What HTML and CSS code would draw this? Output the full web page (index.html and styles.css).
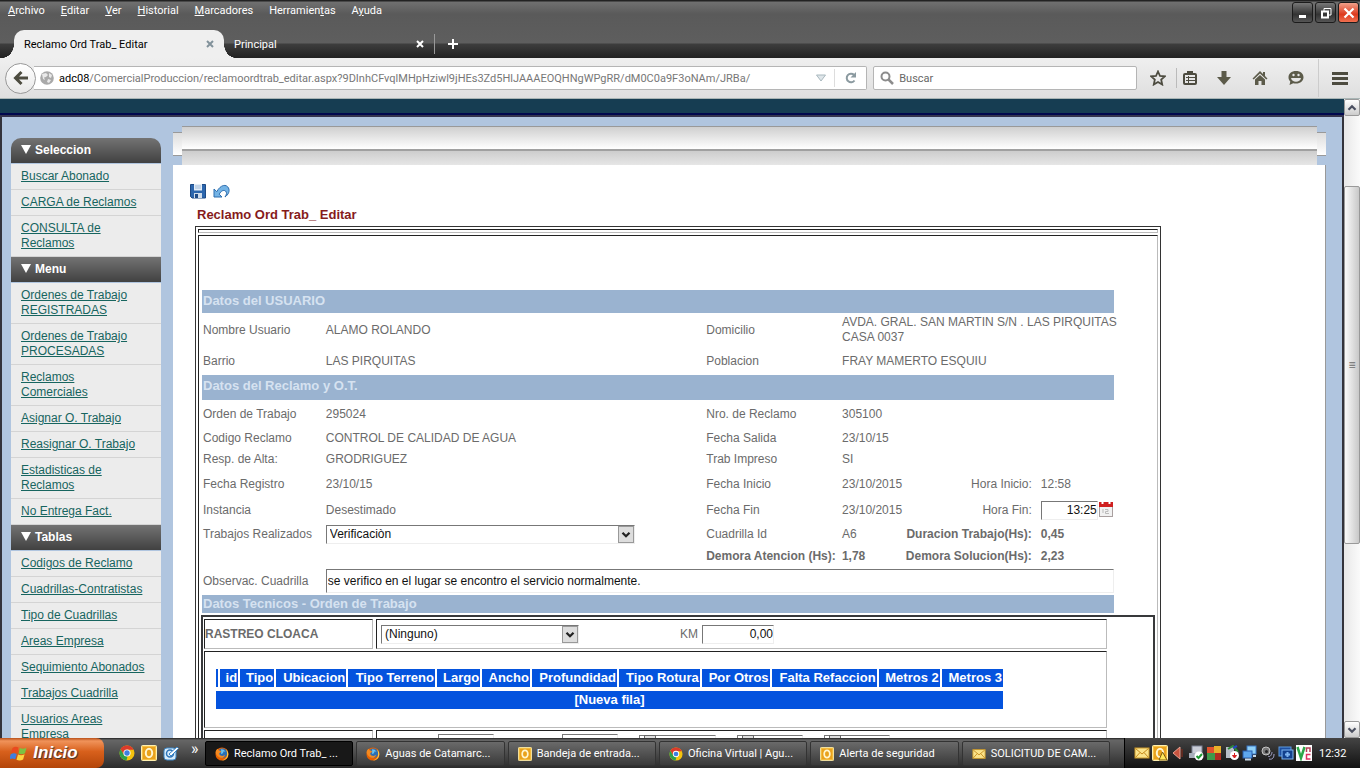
FILE: index.html
```html
<!DOCTYPE html>
<html lang="es">
<head>
    <meta charset="utf-8">
    <title>Reclamo Ord Trab_ Editar</title>
    <link rel="stylesheet" href="styles.css">
</head>
<body>
    <!-- shared icons -->
    <svg class="defs" width="0" height="0">
        <symbol id="firefox" viewBox="0 0 16 16">
            <circle cx="8" cy="8" r="7.5" fill="#e66000"/>
            <circle cx="8.6" cy="7" r="5.4" fill="#2a6fb5"/>
            <path d="M7 2.5c2 0 4 .8 5 3-1-.6-2-.6-2.600 0 .4 1.500-1 2.500-2.400 2.500z" fill="#6cc3ec"/>
            <path d="M.6 6C1 4 2 2.600 3 2c.2 1 .8 1.600 2 2 1.500.2 2 .8 1.800 1.800-.8.800-2 1-2 2.200 1 2.500 5 3 7 .5C11 12 8 13 5.500 12 2.500 11 1 8.500.6 6z" fill="#f58a1f"/>
            <path d="M12.500 2.500C15 4.500 16 8 14.500 11.500 13 14.500 9.500 16 6.500 15.300c4 0 7-2.800 7.300-6.300.2-2.500-.3-4.500-1.300-6.500z" fill="#ffcf4a"/>
        </symbol>
        <symbol id="chrome" viewBox="0 0 16 16">
            <circle cx="8" cy="8" r="7.500" fill="#f4c20d"/>
            <path d="M1.500 4.300A7.500 7.500 0 0 1 14.700 4.800L8 4.800 5 10z" fill="#db3a2b"/>
            <path d="M1.500 4.300 5 10l3.500 1.500L7.500 15.500A7.500 7.500 0 0 1 1.500 4.300z" fill="#2f9e4b"/>
            <circle cx="8" cy="8" r="3.600" fill="#fff"/>
            <circle cx="8" cy="8" r="2.700" fill="#3f7fe0"/>
        </symbol>
        <symbol id="outlook" viewBox="0 0 16 16">
            <rect x=".5" y=".5" width="15" height="15" rx="1" fill="#f6c044" stroke="#fff0b0"/>
            <rect x="2" y="2" width="12" height="12" fill="#e9a21d"/>
            <ellipse cx="8" cy="8" rx="3.200" ry="4.200" fill="none" stroke="#fff6d0" stroke-width="2"/>
        </symbol>
        <symbol id="mail" viewBox="0 0 16 16">
            <rect x="1" y="3" width="14" height="10" fill="#fbe38a" stroke="#c9982a"/>
            <path d="M1.500 3.500 8 9l6.500-5.500M1.500 12.500 6 7.500M14.500 12.500 10 7.500" fill="none" stroke="#c58a1c"/>
        </symbol>
        <symbol id="chevron" viewBox="0 0 16 16">
            <path d="M4 6l4 4 4-4" fill="none" stroke="currentColor" stroke-width="2.600"/>
        </symbol>
        <symbol id="close" viewBox="0 0 8 8">
            <path d="M1 1l6 6M7 1L1 7" fill="none" stroke="currentColor" stroke-width="2"/>
        </symbol>
    </svg>

    <header class="titlebar">
        <div class="title-row">
            <nav class="menubar">
                <a href="#"><u>A</u>rchivo</a>
                <a href="#"><u>E</u>ditar</a>
                <a href="#"><u>V</u>er</a>
                <a href="#"><u>H</u>istorial</a>
                <a href="#"><u>M</u>arcadores</a>
                <a href="#">Herramien<u>t</u>as</a>
                <a href="#">A<u>y</u>uda</a>
            </nav>
            <div class="window-buttons">
                <button aria-label="Minimizar"><svg width="16" height="16"><rect x="4" y="10" width="7" height="3" fill="#fff"/></svg></button>
                <button aria-label="Restaurar"><svg width="16" height="16" fill="none" stroke="#fff"><path d="M6 6V3.500h7V10h-2"/><rect x="4" y="6.500" width="6" height="6" stroke-width="2"/></svg></button>
                <button class="win-close" aria-label="Cerrar"><svg width="16" height="16"><path d="M3.500 3.500l9 9M12.500 3.500l-9 9" stroke="#fff" stroke-width="2.200"/></svg></button>
            </div>
        </div>
        <div class="tabs">
            <div class="tab active">
                <span>Reclamo Ord Trab_ Editar</span>
                <button aria-label="Cerrar pestaña"><svg width="8" height="8"><use href="#close"/></svg></button>
            </div>
            <div class="tab">
                <span>Principal</span>
                <button aria-label="Cerrar pestaña"><svg width="8" height="8"><use href="#close"/></svg></button>
            </div>
            <button class="new-tab" aria-label="Nueva pestaña"><svg width="10" height="10"><path d="M5 0v10M0 5h10" stroke="#fff" stroke-width="2"/></svg></button>
        </div>
    </header>

    <div class="toolbar">
        <button class="back" aria-label="Atrás"><svg width="16" height="16"><path d="M15 8H3M8.500 2L2.500 8l6 6" fill="none" stroke="#4d4c40" stroke-width="3"/></svg></button>
        <div class="urlbar">
            <svg width="14" height="14" viewBox="0 0 14 14"><circle cx="7" cy="7" r="6.800" fill="#a9a9a9"/><path d="M2 3l4-1 2 2-2 2-2 .5L5 9 3 8zM9 2l3 2-1 3-2-1zM8 8l3 1-2 3-2-1z" fill="#e9e9e9"/></svg>
            <label for="url">adc08</label><input id="url" type="text" value="/ComercialProduccion/reclamoordtrab_editar.aspx?9DInhCFvqlMHpHziwl9jHEs3Zd5HlJAAAEOQHNgWPgRR/dM0C0a9F3oNAm/JRBa/">
            <button class="drop" aria-label="Historial"><svg width="12" height="8"><path d="M1.500 1h9L6 7z" fill="#dfe6ea" stroke="#a9b8be"/></svg></button>
            <button class="reload" aria-label="Recargar"><svg width="14" height="14"><path d="M10.500 9.500A4.300 4.300 0 1 1 10 3.800" fill="none" stroke="#8b9aa0" stroke-width="2"/><path d="M12 1v5.500H6.500z" fill="#8b9aa0"/></svg></button>
        </div>
        <div class="searchbar">
            <svg width="14" height="14"><circle cx="5.500" cy="5.500" r="4" fill="none" stroke="#8c8c8c" stroke-width="2"/><path d="M8.500 8.500l4.500 4.500" stroke="#8c8c8c" stroke-width="2.500"/></svg>
            <input type="text" placeholder="Buscar" aria-label="Buscar">
        </div>
        <div class="tools">
            <button aria-label="Marcar"><svg width="16" height="16"><path d="M8 1.500l2 4.500 4.800.4-3.600 3.200 1 4.900L8 12l-4.200 2.500 1-4.900L1.200 6.400 6 6z" fill="none" stroke="#4d4c40" stroke-width="1.800"/></svg></button>
            <button class="ruled" aria-label="Lista"><svg width="16" height="16"><rect x="5" y="1" width="6" height="4" fill="#4d4c40"/><rect x="2" y="4" width="12" height="10" rx="1" fill="none" stroke="#4d4c40" stroke-width="2"/><path d="M4 7.500h9M4 10.500h9M6.500 6v8" stroke="#4d4c40"/></svg></button>
            <button aria-label="Descargas"><svg width="16" height="16"><path d="M5.500 1h5v6H15l-7 8-7-8h4.500z" fill="#5c5b4a"/></svg></button>
            <button aria-label="Inicio"><svg width="16" height="16"><path d="M8 1L.5 8.500l1.200 1L8 3.500l6.300 6 1.200-1L13 6V2h-2v2z" fill="#5c5b4a"/><path d="M3 9.500l5-4.500 5 4.500V15H9.500v-4h-3v4H3z" fill="#5c5b4a"/></svg></button>
            <button aria-label="Chat"><svg width="16" height="16"><path d="M8 1c4.500 0 7.500 2.700 7.500 6.300S12.500 13.600 8 13.600c-1 0-2-.1-2.800-.4L1.500 15l.8-3.500C1 10.300.5 9 .5 7.300.5 3.700 3.500 1 8 1z" fill="#5c5b4a"/><path d="M3 8h10c-.5 2.500-2.500 3.800-5 3.800S3.500 10.500 3 8z" fill="#e6e6e6"/><circle cx="5.500" cy="5" r="1.200" fill="#e6e6e6"/><circle cx="10.500" cy="5" r="1.200" fill="#e6e6e6"/></svg></button>
        </div>
        <button class="hamburger" aria-label="Menú"><svg width="16" height="14"><path d="M0 2.500h16M0 7.500h16M0 12.500h16" stroke="#4d4c40" stroke-width="3"/></svg></button>
    </div>

    <div class="viewport">
        <div class="page">
            <div class="page-top"></div>
            <div class="page-body">
                <aside class="sidebar">
                    <h2>Seleccion</h2>
                    <ul>
                        <li><a href="#">Buscar Abonado</a></li>
                        <li><a href="#">CARGA de Reclamos</a></li>
                        <li><a href="#">CONSULTA de Reclamos</a></li>
                    </ul>
                    <h2>Menu</h2>
                    <ul>
                        <li><a href="#">Ordenes de Trabajo REGISTRADAS</a></li>
                        <li><a href="#">Ordenes de Trabajo PROCESADAS</a></li>
                        <li><a href="#">Reclamos<br>Comerciales</a></li>
                        <li><a href="#">Asignar O. Trabajo</a></li>
                        <li><a href="#">Reasignar O. Trabajo</a></li>
                        <li><a href="#">Estadisticas de Reclamos</a></li>
                        <li><a href="#">No Entrega Fact.</a></li>
                    </ul>
                    <h2>Tablas</h2>
                    <ul>
                        <li><a href="#">Codigos de Reclamo</a></li>
                        <li><a href="#">Cuadrillas-Contratistas</a></li>
                        <li><a href="#">Tipo de Cuadrillas</a></li>
                        <li><a href="#">Areas Empresa</a></li>
                        <li><a href="#">Sequimiento Abonados</a></li>
                        <li><a href="#">Trabajos Cuadrilla</a></li>
                        <li><a href="#">Usuarios Areas Empresa</a></li>
                    </ul>
                </aside>

                <main>
                    <div class="strip">
                        <div class="strip-end"></div>
                        <div class="strip-mid">
                            <div class="strip-top"></div>
                            <div class="strip-bottom"></div>
                        </div>
                        <div class="strip-end"></div>
                    </div>
                    <div class="content">
                        <div class="actions">
                            <button aria-label="Guardar"><svg width="16" height="16"><path d="M.5 1.500h15v13.500H2L.5 13.500z" fill="#2c66ad" stroke="#1d4a86"/><rect x="4" y="1" width="8" height="6.500" fill="#e4eef8"/><path d="M5 3h6M5 5h6" stroke="#a3bcd8"/><rect x="4" y="10" width="8" height="5" fill="#cfdcea"/><rect x="5" y="11" width="3" height="4" fill="#1d4a86"/></svg></button>
                            <button aria-label="Deshacer"><svg width="17" height="16"><path d="M1 6v8h8l-2.800-2.800C8 8 10.500 6.500 12.500 8c1.500 1.300 1.300 3.500-.5 6 3.500-2.500 5-6 3.500-9C13.500.8 7.500 1.500 3.800 8.700z" fill="#74b4e6" stroke="#2b6cae"/></svg></button>
                        </div>
                        <h1>Reclamo Ord Trab_ Editar</h1>

                        <form class="frame">
                            <div class="frame-line"></div>
                            <div class="frame-box">
                                <h3 class="band band-user">Datos del USUARIO</h3>
                                <div class="row row-address">
                                    <span>Nombre Usuario</span><span>ALAMO ROLANDO</span>
                                    <span>Domicilio</span><span class="wide">AVDA. GRAL. SAN MARTIN S/N . LAS PIRQUITAS<br>CASA 0037</span>
                                </div>
                                <div class="row row-tall">
                                    <span>Barrio</span><span>LAS PIRQUITAS</span>
                                    <span>Poblacion</span><span class="wide">FRAY MAMERTO ESQUIU</span>
                                </div>

                                <h3 class="band band-claim">Datos del Reclamo y O.T.</h3>
                                <div class="row row-tall">
                                    <span>Orden de Trabajo</span><span>295024</span>
                                    <span>Nro. de Reclamo</span><span>305100</span>
                                </div>
                                <div class="row row-short">
                                    <span>Codigo Reclamo</span><span>CONTROL DE CALIDAD DE AGUA</span>
                                    <span>Fecha Salida</span><span>23/10/15</span>
                                </div>
                                <div class="row row-short">
                                    <span>Resp. de Alta:</span><span>GRODRIGUEZ</span>
                                    <span>Trab Impreso</span><span>SI</span>
                                </div>
                                <div class="row row-tall">
                                    <span>Fecha Registro</span><span>23/10/15</span>
                                    <span>Fecha Inicio</span><span>23/10/2015</span>
                                    <span class="right">Hora Inicio:</span><span>12:58</span>
                                </div>
                                <div class="row">
                                    <span>Instancia</span><span>Desestimado</span>
                                    <span>Fecha Fin</span><span>23/10/2015</span>
                                    <label class="right" for="horafin">Hora Fin:</label>
                                    <span class="time">
                                        <input id="horafin" type="text" value="13:25">
                                        <svg width="14" height="16"><rect x=".5" y="2.500" width="13" height="13" fill="#f2f2f2" stroke="#a9a0a0"/><rect x="0" y="1" width="14" height="5" fill="#cf1f1f"/><path d="M3.500 0v3M10.500 0v3" stroke="#fff" stroke-width="2"/><path d="M4 8v4M6 8.500h3v2H6.500v2H10" fill="none" stroke="#bbb"/></svg>
                                    </span>
                                </div>
                                <div class="row">
                                    <label for="trabajos">Trabajos Realizados</label>
                                    <span class="dropdown dropdown-work">
                                        <select id="trabajos"><option>Verificaciòn</option></select>
                                        <svg width="16" height="17"><use href="#chevron"/></svg>
                                    </span>
                                    <span>Cuadrilla Id</span><span>A6</span>
                                    <b class="right">Duracion Trabajo(Hs):</b><b>0,45</b>
                                </div>
                                <div class="row row-short">
                                    <span></span><span></span>
                                    <b>Demora Atencion (Hs):</b><b>1,78</b>
                                    <b class="right">Demora Solucion(Hs):</b><b>2,23</b>
                                </div>
                                <div class="row row-obs">
                                    <label for="observac">Observac. Cuadrilla</label>
                                    <input id="observac" type="text" value="se verifico en el lugar se encontro el servicio normalmente.">
                                </div>

                                <h3 class="band band-tech">Datos Tecnicos - Orden de Trabajo</h3>
                                <div class="tech">
                                    <div class="tech-row">
                                        <div class="cell cell-name"><b>RASTREO CLOACA</b></div>
                                        <div class="cell cell-fields">
                                            <span class="dropdown dropdown-trace">
                                                <select aria-label="Rastreo cloaca"><option>(Ninguno)</option></select>
                                                <svg width="16" height="17"><use href="#chevron"/></svg>
                                            </span>
                                            <label for="km">KM</label>
                                            <input id="km" type="text" value="0,00">
                                        </div>
                                    </div>
                                    <div class="cell cell-table">
                                        <table>
                                            <thead>
                                                <tr><th></th><th>id</th><th>Tipo</th><th>Ubicacion</th><th>Tipo Terreno</th><th>Largo</th><th>Ancho</th><th>Profundidad</th><th>Tipo Rotura</th><th>Por Otros</th><th>Falta Refaccion</th><th>Metros 2</th><th>Metros 3</th></tr>
                                            </thead>
                                            <tbody>
                                                <tr><td colspan="13">[Nueva fila]</td></tr>
                                            </tbody>
                                        </table>
                                    </div>
                                    <div class="tech-row">
                                        <div class="cell cell-name"></div>
                                        <div class="cell cell-more">
                                            <input class="first" type="text" aria-label="Largo">
                                            <input type="text" aria-label="Ancho">
                                            <span class="pick"><input class="long" type="text" aria-label="Profundidad"><i></i></span>
                                            <span class="pick"><input type="text" aria-label="Metros 2"><i></i></span>
                                            <span class="pick"><input type="text" aria-label="Metros 3"><i></i></span>
                                        </div>
                                    </div>
                                </div>
                            </div>
                        </form>
                    </div>
                </main>
            </div>
        </div>
        <div class="scrollbar">
            <button aria-label="Subir"><svg class="up" width="14" height="14"><use href="#chevron"/></svg></button>
            <div class="track"><div class="thumb">≡</div></div>
            <button aria-label="Bajar"><svg width="14" height="14"><use href="#chevron"/></svg></button>
        </div>
    </div>

    <footer class="taskbar">
        <button class="start">
            <svg width="18" height="18"><path d="M2.500 4C4.500 2.500 6.500 2.500 8.500 3.500L7 9C5 8 3 8 1 9.300z" fill="#ea4a1f"/><path d="M9.800 4C12 5 14 5 16.500 3.800L15 9.200c-2.200 1.200-4.300 1.200-6.500.3z" fill="#7cc242"/><path d="M.7 10.300C2.700 9 4.700 9 6.700 10l-1.500 5.300c-2-1-4-1-6 .2z" fill="#3f7fe0"/><path d="M8 10.500c2.200 1 4.300 1 6.600-.2l-1.500 5.300c-2.200 1.200-4.500 1.200-6.600.2z" fill="#ffd23f"/></svg>
            Inicio
        </button>
        <div class="quick">
            <svg width="16" height="16"><use href="#chrome"/></svg>
            <svg width="16" height="16"><use href="#outlook"/></svg>
            <svg width="16" height="16"><rect x="1" y="3" width="12" height="12" rx="3" fill="#d8ecfa" stroke="#3b86c8"/><circle cx="7" cy="8.500" r="3.500" fill="none" stroke="#2e74b8" stroke-width="1.500"/><path d="M6 9l8-7 1.500 1.500L8 11z" fill="#fff" stroke="#3b86c8"/></svg>
            <span>»</span>
        </div>
        <div class="tasks">
            <button class="current"><svg width="14" height="14"><use href="#firefox"/></svg>Reclamo Ord Trab_ ...</button>
            <button><svg width="14" height="14"><use href="#firefox"/></svg>Aguas de Catamarc...</button>
            <button><svg width="14" height="14"><use href="#outlook"/></svg>Bandeja de entrada...</button>
            <button><svg width="14" height="14"><use href="#chrome"/></svg>Oficina Virtual | Agu...</button>
            <button><svg width="14" height="14"><use href="#outlook"/></svg>Alerta de seguridad</button>
            <button><svg width="14" height="14"><use href="#mail"/></svg>SOLICITUD DE CAM...</button>
        </div>
        <div class="tray">
            <svg width="16" height="16"><use href="#mail"/></svg>
            <svg width="16" height="16"><use href="#outlook"/><path d="M10.500 7l4.500 8H7z" fill="#ffe85a" stroke="#7a5a10"/></svg>
            <svg width="16" height="16"><path d="M3 8l7-6v12z" fill="#c9543f" stroke="#e8a090"/><path d="M12 4v8" stroke="#5e2a20" stroke-width="2"/></svg>
            <svg width="16" height="16"><rect x="4" y="1" width="10" height="8" fill="#c9ccd6" stroke="#7d8294"/><rect x="1" y="8" width="9" height="5" fill="#a8aebb"/><circle cx="11" cy="11" r="4.500" fill="#fff"/><path d="M8.500 11l2 2 3.500-4" fill="none" stroke="#1d9a33" stroke-width="2"/></svg>
            <svg width="16" height="16"><rect x="1" y="2" width="7" height="6" fill="#e0522d"/><rect x="8" y="1" width="7" height="8" fill="#e8b02a"/><rect x="1" y="8" width="8" height="7" fill="#3f9a4a"/><rect x="9" y="8" width="6" height="7" fill="#b22c20"/></svg>
            <svg width="16" height="16"><rect x="2" y="2" width="8" height="11" fill="#b9bec8"/><path d="M4 4l5-3 5 6" fill="none" stroke="#2d8a3a" stroke-width="2"/><path d="M9 3l4-2" stroke="#2546c0" stroke-width="2"/><circle cx="10.500" cy="10.500" r="4.500" fill="#fff"/><path d="M10.500 8v3M8.500 10.500h4l-2 2.500z" fill="#d62020" stroke="#d62020"/></svg>
            <svg width="16" height="16"><rect x="5" y="1" width="9" height="8" fill="#8fd0f7" stroke="#3a78c8"/><rect x="1" y="6" width="9" height="7" fill="#5fa8ee" stroke="#2a5fb0"/><path d="M3 14.500h6M11 11h3" stroke="#c8d8e8" stroke-width="2"/></svg>
            <svg width="16" height="16" fill="none"><circle cx="6" cy="6" r="4" fill="#777" stroke="#c5c5c5"/><circle cx="6.500" cy="6.500" r="1.500" fill="#222"/><path d="M8 11c2 2 4-2 4-4M9 14c4 1 5-2 5-5" stroke="#a9a9d0"/></svg>
            <svg width="16" height="16"><rect x="1" y="2" width="12" height="9" fill="#1d4fa0" stroke="#5f9be0"/><rect x="4" y="5" width="11" height="9" fill="#12408c" stroke="#7db4f0"/><path d="M7 9.500h5M9.500 7v5" stroke="#7db4f0" stroke-width="2"/></svg>
            <svg width="16" height="16"><rect width="16" height="16" fill="#fff"/><path d="M1.500 2L5 13 8.500 2" fill="none" stroke="#2da84a" stroke-width="2.500"/><path d="M10.500 7V3h3.500v4" fill="none" stroke="#b6435a" stroke-width="1.500"/><path d="M14.500 9.500h-4V14h4" fill="none" stroke="#e03060" stroke-width="1.500"/></svg>
            <time>12:32</time>
        </div>
    </footer>
</body>
</html>
```
FILE: styles.css
```css
* {
    box-sizing: border-box;
}
body {
    margin: 0;
    height: 100vh;
    display: flex;
    flex-direction: column;
    overflow: hidden;
    font-family: "Liberation Sans", Arial, sans-serif;
    font-size: 12px;
    line-height: 15px;
    color: #6b6b6b;
}
button, input, select {
    font-family: inherit;
    font-size: inherit;
    color: inherit;
    margin: 0;
    padding: 0;
}
button {
    background: none;
    border: none;
    display: flex;
    align-items: center;
    justify-content: center;
}
svg {
    display: block;
    flex: none;
}
.defs {
    position: absolute;
}
h1, h2, h3, ul {
    margin: 0;
    padding: 0;
}

/* browser window */
.titlebar, .toolbar, .taskbar {
    flex: none;
    font-family: Roboto, "Liberation Sans", sans-serif;
    font-size: 11px;
}
.titlebar {
    height: 58px;
    display: flex;
    flex-direction: column;
    justify-content: space-between;
    background: linear-gradient(#222 0, #222 1px, #707070 2px, #5a5a5a 14px, #5e5e5e 43px, #3d3d3d 44px, #222 58px);
    color: #fff;
}
.title-row {
    display: flex;
    justify-content: space-between;
}
.menubar {
    display: flex;
    gap: 16px;
    padding: 3px 8px;
}
.menubar a {
    color: #fff;
    text-decoration: none;
}
.window-buttons {
    display: flex;
    gap: 2px;
    padding: 2px 1px 0;
}
.window-buttons button {
    width: 21px;
    height: 21px;
    border: 1px solid #1c1c1c;
    border-radius: 3px;
    background: linear-gradient(#777, #333 60%, #555);
}
.window-buttons .win-close {
    background: linear-gradient(#f0a08a, #dd3a1e 60%, #f07050);
}
.tabs {
    display: flex;
    padding-left: 14px;
}
.tab {
    display: flex;
    align-items: center;
    justify-content: space-between;
    width: 210px;
    height: 28px;
    padding: 0 10px;
}
.tab.active {
    position: relative;
    background: #efefef;
    color: #000;
    border-radius: 10px 10px 0 0;
}
.tab.active::before, .tab.active::after {
    content: "";
    position: absolute;
    bottom: 0;
    width: 12px;
    height: 14px;
}
.tab.active::before {
    right: 100%;
    background: radial-gradient(ellipse 12px 14px at 0 0, transparent 98%, #efefef 100%);
}
.tab.active::after {
    left: 100%;
    background: radial-gradient(ellipse 12px 14px at 100% 0, transparent 98%, #efefef 100%);
}
.tab.active button {
    color: #82929b;
}
.new-tab {
    width: 36px;
    margin: 4px 0;
    border-left: 1px solid #999;
}
.toolbar {
    height: 41px;
    display: flex;
    align-items: center;
    padding-left: 5px;
    background: linear-gradient(#efefef, #dfdfdf);
    border-bottom: 1px solid #a9b5b5;
}
.back {
    width: 31px;
    height: 31px;
    border: 1px solid #999;
    border-radius: 50%;
    background: linear-gradient(#fff, #e8e8e8);
    position: relative;
}
.urlbar {
    flex: 840 1 0;
    display: flex;
    align-items: center;
    height: 24px;
    margin-left: -2px;
    padding-left: 6px;
    border: 1px solid #b5b5b5;
    border-left: none;
    border-radius: 0 2px 2px 0;
    background: #fff;
}
.urlbar label {
    padding-left: 5px;
    color: #000;
}
.urlbar input[type="text"], .searchbar input[type="text"] {
    flex: 1;
    min-width: 0;
    border: none;
    background: none;
    color: #777;
}
.drop {
    width: 26px;
}
.reload {
    width: 32px;
    height: 18px;
    border-left: 1px solid #ddd;
}
.searchbar {
    flex: 260 1 0;
    display: flex;
    align-items: center;
    gap: 5px;
    height: 24px;
    margin-left: 6px;
    padding-left: 6px;
    border: 1px solid #b5b5b5;
    border-radius: 2px;
    background: #fff;
}
.searchbar input::placeholder {
    color: #666;
}
.tools {
    display: flex;
    padding: 0 4px 0 3px;
}
.tools button {
    width: 36px;
    height: 20px;
}
.tools .ruled {
    width: 30px;
    padding-right: 4px;
    border-left: 1px solid #bbb;
}
.hamburger {
    width: 42px;
    height: 38px;
    border-left: 1px solid #ccc;
}

/* page */
.viewport {
    flex: 1;
    min-height: 0;
    display: flex;
}
.page {
    flex: 1;
    min-width: 0;
    overflow: hidden;
    display: flex;
    flex-direction: column;
}
.page-top {
    flex: none;
    height: 18px;
    background: #163d52;
    border-bottom: 2px solid #34344e;
    box-shadow: inset 0 -2px #00084e;
}
.page-body {
    flex: 1;
    min-height: 0;
    display: flex;
    gap: 12px;
    padding: 9px 16px 0 9px;
    border: solid #33333b;
    border-width: 0 2px;
    background: #b0c5df;
}
.sidebar {
    flex: none;
    width: 150px;
    padding-top: 12px;
}
.sidebar h2 {
    height: 25px;
    margin-bottom: 1px;
    padding-left: 10px;
    background: linear-gradient(#737373, #414141);
    color: #fff;
    font-size: 12px;
    line-height: 25px;
}
.sidebar h2::before {
    content: "";
    display: inline-block;
    margin-right: 4px;
    border: 5px solid transparent;
    border-top: 9px solid #fff;
    border-bottom: 0;
}
.sidebar h2:first-child {
    border-radius: 10px 10px 0 0;
}
.sidebar ul {
    list-style: none;
    background: #ececec;
}
.sidebar li {
    padding: 5px 10px;
    border-bottom: 1px solid #d4d4d4;
}
.sidebar a {
    color: #17655f;
}
main {
    flex: 1;
    min-width: 0;
    display: flex;
    flex-direction: column;
}
.strip {
    flex: none;
    display: flex;
    height: 39px;
}
.strip-end {
    width: 9px;
    height: 24px;
    margin-top: 6px;
    border-top: 1px solid #999;
    border-bottom: 1px solid #999;
    background: linear-gradient(#ddd, #fff);
}
.strip-mid {
    flex: 1;
}
.strip-top {
    height: 25px;
    border-top: 1px solid #999;
    border-bottom: 2px solid #a0a0a0;
    background: linear-gradient(#cfcfcf, #fff);
}
.strip-bottom {
    height: 14px;
    background: linear-gradient(#cdcdcd, #e6e6e6);
}
.content {
    flex: 1;
    min-height: 0;
    padding: 18px 20px 0 22px;
    background: #fff;
    border-right: 1px solid #999;
}
.actions {
    display: flex;
    gap: 7px;
    margin-left: -5px;
}
h1 {
    margin: 8px 2px 4px;
    color: #861b1b;
    font-size: 13px;
    line-height: 15px;
}
.frame {
    width: 87%;
    padding: 2px;
    border: 1px solid #333;
}
.frame-line, .frame-box, .cell {
    border: 1px solid;
    border-color: #222 #bbb #bbb #222;
}
.frame-line {
    height: 4px;
    margin-bottom: 2px;
}
.frame-box {
    padding: 54px 2px 0;
    height: 600px;
}
.band {
    margin: 0 41px 0 1px;
    padding-left: 1px;
    background: #9ab3d0;
    color: #d6e2f0;
    font-size: 13px;
}
.band-user {
    line-height: 22px;
    padding-bottom: 1px;
}
.band-claim {
    line-height: 22px;
    padding-bottom: 3px;
}
.band-tech {
    margin-bottom: 2px;
    line-height: 18px;
}
.row {
    display: grid;
    grid-template-columns: 123fr 381fr 136fr 64fr 126fr 82fr;
    align-items: center;
    height: 24px;
    margin: 0 41px 0 2px;
    white-space: nowrap;
}
.row-address {
    height: 34px;
}
.row-tall {
    height: 28px;
}
.row-short {
    height: 21px;
}
.row .wide {
    grid-column: span 3;
}
/* long labels grow to the left of their column */
.row .right {
    justify-self: end;
}
.row .right + * {
    padding-left: 9px;
}
.row-obs {
    grid-template-columns: 123fr 789fr;
    height: 28px;
}
input[type="text"], select {
    border: 1px solid;
    border-color: #777 #eee #eee #777;
    border-radius: 0;
    background: #fff;
    color: #111;
}
.row-obs input {
    height: 24px;
    padding-left: 1px;
}
.time {
    display: flex;
    gap: 1px;
}
.time input {
    width: 57px;
    height: 19px;
    text-align: right;
}
.dropdown {
    position: relative;
    display: block;
}
.dropdown select {
    appearance: none;
    width: 100%;
    height: 19px;
    padding: 0 20px 0 3px;
}
.dropdown svg {
    position: absolute;
    right: 1px;
    top: 1px;
    border: 1px solid #999;
    background: #ddd;
    color: #222;
    pointer-events: none;
}
.dropdown-work {
    width: 309px;
}
.dropdown-trace {
    width: 198px;
}
.tech {
    display: flex;
    flex-direction: column;
    gap: 2px;
    height: 200px;
    padding: 2px 46px 0 1px;
    border: 2px solid #38393b;
}
.tech-row {
    display: flex;
    gap: 3px;
}
.cell {
    height: 30px;
}
.cell-name {
    width: 169px;
    padding-top: 7px;
}
.cell-fields, .cell-more {
    flex: 1;
    display: flex;
    align-items: center;
    padding-left: 4px;
}
.cell-fields label {
    margin: 0 4px 0 101px;
}
.cell-fields input {
    width: 72px;
    height: 19px;
    text-align: right;
}
.cell-more {
    align-items: flex-start;
    gap: 21px;
    padding: 3px 0 0 61px;
}
.cell-more input {
    width: 56px;
    height: 19px;
}
.cell-more .first {
    margin-right: 47px;
}
.pick {
    position: relative;
    padding-top: 1px;
}
.cell-more .pick input {
    display: block;
    width: 66px;
}
.cell-more .pick .long {
    width: 77px;
}
.pick i {
    position: absolute;
    left: 5px;
    top: 1px;
    width: 12px;
    height: 18px;
    border: 1px solid #666;
    background: #ddd;
}
.cell-table {
    height: 77px;
    padding: 13px 9px;
}
.cell-table table {
    width: 791px;
    border-spacing: 2px 4px;
    color: #fff;
    font-size: 13px;
    font-weight: bold;
    line-height: 18px;
    white-space: nowrap;
}
.cell-table th {
    padding: 0 1px 0 5px;
    background: #0453de;
    text-align: right;
}
.cell-table th:first-child {
    padding: 0 0 0 2px;
}
.cell-table td {
    padding: 0;
    background: #0453de;
    text-align: center;
}

/* window scrollbar */
.scrollbar {
    flex: none;
    width: 16px;
    display: flex;
    flex-direction: column;
    background: linear-gradient(90deg, #e8e8e8, #fafafa);
}
.scrollbar button {
    height: 17px;
    border: 1px solid #999;
    border-radius: 2px;
    background: linear-gradient(#fff, #ccc);
    color: #4a4f60;
}
.scrollbar .up {
    transform: rotate(180deg);
}
.track {
    flex: 1;
    padding-top: 70px;
}
.thumb {
    height: 67%;
    display: flex;
    align-items: center;
    justify-content: center;
    border: 1px solid #999;
    border-radius: 2px;
    background: linear-gradient(90deg, #fafafa, #c8c8c8);
}

/* taskbar */
.taskbar {
    height: 30px;
    display: flex;
    background: linear-gradient(#222 0, #666 2px, #4c4c4c 50%, #2b2b2b);
    color: #fff;
}
.start {
    width: 104px;
    gap: 5px;
    padding-right: 16px;
    border-radius: 0 8px 8px 0;
    background: linear-gradient(#b8501a, #f0935a 3px, #d8601c 45%, #b34509);
    color: #fff;
    font-family: "Liberation Sans", Arial, sans-serif;
    font-size: 17px;
    font-weight: bold;
    font-style: italic;
    text-shadow: 1px 1px 1px #333;
}
.quick {
    width: 101px;
    display: flex;
    align-items: center;
    gap: 6px;
    padding-left: 15px;
}
.quick span {
    margin: 0 0 10px 6px;
    font-size: 16px;
}
.tasks {
    flex: 1;
    min-width: 0;
    display: flex;
    gap: 3px;
    padding-right: 14px;
}
.tasks button {
    flex: 1;
    min-width: 0;
    justify-content: flex-start;
    gap: 5px;
    height: 25px;
    margin-top: 3px;
    padding-left: 9px;
    border: 1px solid #333;
    border-radius: 2px;
    background: linear-gradient(#6a6a6a, #3a3a3a);
    white-space: nowrap;
}
.tasks .current {
    background: #181818;
    border-color: #000;
}
.tray {
    width: 236px;
    display: flex;
    align-items: center;
    gap: 2px;
    padding-left: 9px;
    border-left: 1px solid #000;
    background: linear-gradient(#444, #111);
}
.tray time {
    margin-left: 5px;
}
```
